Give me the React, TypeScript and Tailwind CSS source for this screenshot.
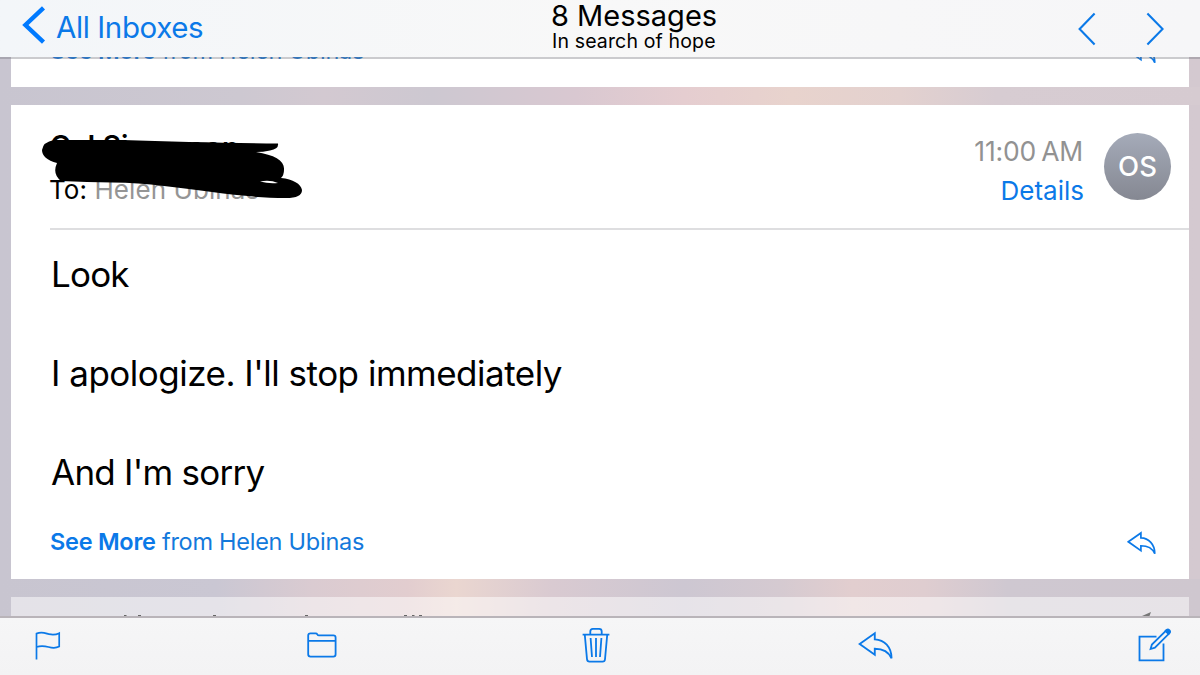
import React from "react";

const BLUE = "#0b79e8";

function ReplyIcon({ className, stroke }: { className: string; stroke: number }) {
  return (
    <svg className={className} viewBox="0 0 34 28" fill="none" stroke={BLUE} strokeWidth={stroke} strokeLinejoin="miter">
      <path d="M1.6 12.6 L16.3 2.2 V8 C25.5 8.3 32.6 15.5 32.6 26.5 C29.5 19.5 24.5 17.2 16.3 17.2 V23 Z" />
    </svg>
  );
}

function SeeMore() {
  return (
    <div className="whitespace-nowrap text-[23.5px] leading-[28px] tracking-[-0.26px] text-[#1379dc]">
      <span className="font-semibold text-[#0b79e8]">See More</span> from Helen Ubinas
    </div>
  );
}

function Header() {
  return (
    <header className="relative z-10 grid h-[57px] shrink-0 grid-cols-[551px_auto_1fr] bg-linear-to-r from-[#f3f6f9] via-[#f8f8f8] to-[#f6f6f8] shadow-[0_2px_0_rgba(110,110,118,0.36)]">
      <div className="flex pl-[22px] text-[#0b79e8]">
        <svg className="mt-[6px] h-[38px] w-[24px]" viewBox="0 0 24 38" fill="none" stroke="#007aff" strokeWidth="4.4">
          <path d="M21.5 1.8 L3.4 19 L21.5 36.2" />
        </svg>
        <span className="ml-[10px] mt-[9px] whitespace-nowrap text-[29.5px] leading-[36px] tracking-[-0.4px]">All Inboxes</span>
      </div>
      <div className="whitespace-nowrap text-black">
        <div className="text-[29px] leading-[32px]">8 Messages</div>
        <div className="-mt-px ml-px text-[19.5px] leading-[20px] tracking-[0.15px]">In search of hope</div>
      </div>
      <div className="flex justify-end gap-[50px] pr-[36px] pt-[12px]">
        <svg className="h-[34px] w-[18px]" viewBox="0 0 18 34" fill="none" stroke={BLUE} strokeWidth="2.1">
          <path d="M16.6 1.4 L1.6 17 L16.6 32.6" />
        </svg>
        <svg className="h-[34px] w-[18px]" viewBox="0 0 18 34" fill="none" stroke={BLUE} strokeWidth="2.1">
          <path d="M1.4 1.4 L16.6 17 L1.4 32.6" />
        </svg>
      </div>
    </header>
  );
}

function Toolbar() {
  return (
    <footer className="relative z-10 flex h-[59px] shrink-0 items-start border-t-2 border-[#b9b4b9] bg-linear-to-b from-[#f6f6f7] to-[#f3f3f4] pl-[35px]">
      <svg className="mt-[13px] h-[30px] w-[26px]" viewBox="0 0 26 30" fill="none" stroke={BLUE} strokeWidth="1.7">
        <path d="M1.5 28.5 V2.6 C7 .2 10.5 2.3 14 3.2 C18 4.1 21 3.8 24.2 2.2 V15.6 C20.5 17.5 17 17 13.5 16 C9.5 14.9 5.5 14.5 1.5 16" />
      </svg>
      <svg className="ml-[246px] mt-[14px] h-[26px] w-[30px]" viewBox="0 0 30 26" fill="none" stroke={BLUE} strokeWidth="1.8">
        <path d="M1.2 8.8 V3.6 Q1.2 1.3 3.5 1.3 H8.6 Q9.8 1.3 10.3 2.3 Q10.8 3.3 12 3.3 H26.4 Q28.6 3.3 28.6 5.5 V22.3 Q28.6 24.6 26.4 24.6 H3.5 Q1.2 24.6 1.2 22.3 V8.8 H28.6" />
      </svg>
      <svg className="ml-[245px] mt-[9px] h-[36px] w-[28px]" viewBox="0 0 28 36" fill="none" stroke={BLUE} strokeWidth="1.8">
        <path d="M.6 7.6 H27.4 M8.3 7.4 V4.4 Q8.3 1.9 10.8 1.9 H17.2 Q19.7 1.9 19.7 4.4 V7.4 M2.8 7.8 L5 32.2 Q5.2 34.6 7.5 34.6 H20.5 Q22.8 34.6 23 32.2 L25.2 7.8 M8.6 11 L10 30 M14 11 V30 M19.4 11 L18 30" />
      </svg>
      <ReplyIcon className="ml-[248px] mt-[13px] h-[29px] w-[35px]" stroke={1.8} />
      <svg className="ml-[245px] mt-[10px] h-[34px] w-[34px]" viewBox="0 0 34 34" fill="none" stroke={BLUE} strokeWidth="1.8">
        <path d="M18.5 8.6 H1.5 V32.4 H25.5 V15.5" />
        <path d="M27.8 2.8 L13.9 16.6 L12.6 21 L16.9 19.7 L30.8 5.8 Z" />
        <path d="M27.6 3 L28.9 1.8 Q30 .9 31.3 2.2 Q32.6 3.5 31.8 4.7 L30.6 6 Z" fill={BLUE} />
      </svg>
    </footer>
  );
}

function Message() {
  return (
    <article className="flex h-[474px] shrink-0 flex-col bg-white">
      <div className="relative ml-[39px] flex h-[125px] shrink-0 justify-between border-b-2 border-[#dedee0] pr-[18px]">
        <div className="whitespace-nowrap pt-[23px]">
          <div className="flex gap-[60px] text-[28px] font-semibold leading-[36px] text-black">
            <span className="tracking-[0.2px]">O J Si</span>
            <span className="mt-[2px] tracking-[0.5px]">son</span>
          </div>
          <div className="-ml-px mt-[9px] text-[26px] leading-[30px] tracking-[0.08px] text-[#959595]">
            <span className="text-black">To:</span> Helen Ubinas
          </div>
        </div>
        <svg className="absolute -left-[8px] top-[30px] h-[66px] w-[262px]" viewBox="0 0 262 66" fill="#000">
          <path d="M12 5 L80 5 C130 6.5 190 8.3 236 8.5 Q237 14 228 15.5 Q221 17 214 17 C233 20 243 26 242 35 Q242 40 239 43 C251 44 259 49 260 55 Q260 63 244 63 C204 63 168 56 122 51 C87 46 54 48 19 46 Q10 39 15 28 Q0 24 0 15 Q1 7 12 5 Z" />
          <path d="M218 46.5 Q228 44.5 236 48 Q227 49 218 46.5 Z" fill="#fff" />
        </svg>
        <div className="flex gap-[21px]">
          <div className="whitespace-nowrap pt-[30px] text-right">
            <div className="text-[26.5px] leading-[32px] tracking-[-0.2px] text-[#929292] [word-spacing:-2px]">11:00 AM</div>
            <div className="-mr-px mt-[8px] text-[26px] leading-[32px] text-[#0b79e8]">Details</div>
          </div>
          <div className="mt-[28px] flex h-[67px] w-[67px] items-center justify-center rounded-full bg-linear-to-b from-[#a5abb9] to-[#858892] pt-px text-[27.5px] font-medium text-white">
            OS
          </div>
        </div>
      </div>
      <div className="flex flex-1 flex-col whitespace-nowrap pl-[40px] pt-[20px] text-[35px] leading-[49.5px] tracking-[-0.5px] text-black">
        <p className="tracking-[-0.8px]">Look</p>
        <p className="mt-[49.5px]">I apologize. I'll stop immediately</p>
        <p className="mt-[49.5px] tracking-[-0.75px]">And I'm sorry</p>
      </div>
      <div className="flex h-[51px] shrink-0 items-start justify-between pl-[39px] pr-[33px]">
        <SeeMore />
        <ReplyIcon className="mt-[3px] h-[24px] w-[29px]" stroke={2} />
      </div>
    </article>
  );
}

export default function App() {
  return (
    <div className="flex h-[675px] w-[1200px] flex-col overflow-hidden bg-white font-['Inter',sans-serif]">
      <Header />
      <main className="flex min-h-0 flex-1 flex-col bg-linear-to-r from-[#c8c5d0] to-[#d4c9d0]">
        <div className="flex h-[30px] shrink-0 flex-col justify-end px-[11px]">
          <article className="flex h-[30px] shrink-0 flex-col justify-end bg-white">
            <div className="flex h-[50px] shrink-0 items-start justify-between pl-[39px] pr-[33px]">
              <SeeMore />
              <ReplyIcon className="mt-[3px] h-[24px] w-[29px]" stroke={2} />
            </div>
          </article>
        </div>
        <div className="h-[18px] shrink-0 bg-[linear-gradient(90deg,#c8c5d0_0%,#cdc8d1_20%,#d3c9d1_27%,#cdc8d1_36%,#d9c8d1_48%,#e5cdd0_57%,#e8d3cd_66%,#e3d1cf_75%,#d7ccd2_83%,#d6cbd1_100%)]" />
        <div className="px-[11px]">
          <Message />
        </div>
        <div className="flex flex-1 flex-col bg-[linear-gradient(90deg,#c8c5d0_0%,#cac7d3_18%,#dacbd1_26%,#e2cdcf_34%,#ead6d0_38%,#d9cad1_46%,#cdc7d2_57%,#d5cad1_65%,#e2cecf_71%,#dfcdd0_77%,#cfc8d1_84%,#cfc7cf_100%)]">
          <div className="mx-[11px] mt-[18px] flex flex-1 items-end justify-between bg-white/50 pr-[38px]">
            <svg className="-mb-px ml-[112px] h-[2px] w-[300px]" viewBox="0 0 300 2" stroke="#666" strokeWidth="2">
              <path d="M1 1 H3.5 M15 1 H18 M90 1 H93 M182 1 H185 M281 1 H284 M289 1 H291.5 M296 1 H299" />
            </svg>
            <svg className="h-[4px] w-[9px]" viewBox="0 0 9 4" fill="#777">
              <path d="M0 4 L9 0 L7.5 4 Z" />
            </svg>
          </div>
        </div>
      </main>
      <Toolbar />
    </div>
  );
}
